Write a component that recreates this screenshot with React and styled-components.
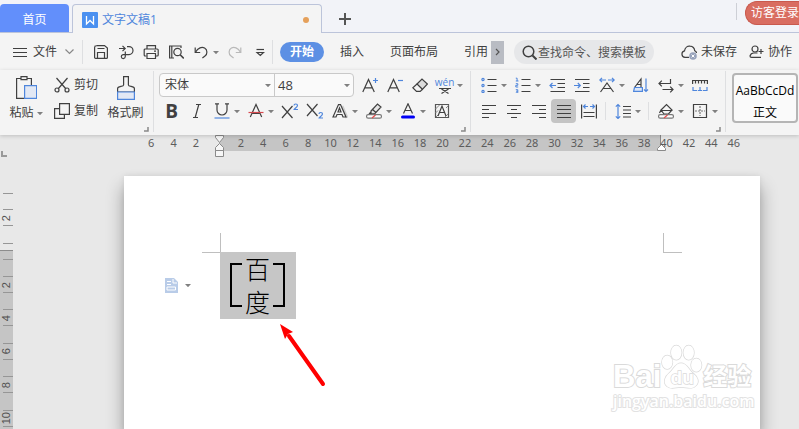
import React from "react";
import styled, { createGlobalStyle, css } from "styled-components";

const INK = "#404040";
const BLUE = "#4f86dc";
const LINE = "#dedfe1";

const GlobalStyle = createGlobalStyle`
  * { box-sizing: border-box; }
  body {
    margin: 0;
    overflow: hidden;
    font-family: "Open Sans", "Noto Sans CJK SC", sans-serif;
    font-size: 12px;
    line-height: 16px;
    color: ${INK};
    background: #e8e8e8;
  }
  button, input, select {
    font: inherit;
    color: inherit;
    border: 0;
    padding: 0;
    margin: 0;
    background: none;
    outline: 0;
  }
  svg { display: block; flex: none; }
`;

const Window = styled.div`
  display: flex;
  flex-direction: column;
  height: 100vh;
`;

/* ---------- tab bar ---------- */
const TabBar = styled.header`
  display: flex;
  flex: none;
  height: 33px;
  background: #f2f3f8;
`;
const Edge = styled.div`
  flex: ${(p) => (p.$grow ? "1" : "none")};
  width: ${(p) => (p.$grow ? "auto" : "3px")};
  border-bottom: 1px solid #bcc4da;
  display: flex;
  align-items: flex-start;
  min-width: 0;
`;
const HomeTab = styled.button`
  width: 69px;
  height: 29px;
  margin-top: 4px;
  padding-top: 3px;
  border-radius: 4px 4px 0 0;
  border-bottom: 1px solid #bcc4da;
  background: #628ffb;
  color: #fff;
`;
const DocTab = styled.button`
  display: flex;
  align-items: center;
  gap: 4px;
  width: 250px;
  height: 29px;
  margin-top: 4px;
  padding: 2px 12px 0 9px;
  border: 1px solid #bcc4da;
  border-bottom: 0;
  border-radius: 4px 4px 0 0;
  background: #f4f4f4;
  color: ${BLUE};
`;
const Unsaved = styled.span`
  width: 6px;
  height: 6px;
  margin-left: auto;
  border-radius: 50%;
  background: #e5a05a;
`;
const NewTab = styled.button`
  margin: 12px 0 0 16px;
`;
const LoginArea = styled.div`
  display: flex;
  margin-left: auto;
`;
const LoginRule = styled.i`
  width: 1px;
  height: 17px;
  margin: 3px 8px 0 0;
  background: #cdcfd6;
`;
const Login = styled.button`
  height: 24px;
  margin-top: 1px;
  padding: 0 0 0 5px;
  border: 1px solid #c9594d;
  border-right: 0;
  border-radius: 12px 0 0 12px;
  background: #d96d61;
  color: #fff;
  white-space: nowrap;
`;

/* ---------- menu row ---------- */
const MenuRow = styled.nav`
  display: flex;
  flex: none;
  align-items: center;
  height: 37px;
  padding: 1px 7px 0 13px;
  background: #f4f4f4;
  white-space: nowrap;
`;
const FileButton = styled.button`
  display: flex;
  align-items: center;
  gap: 6px;
  margin-right: 8px;
  & > svg:last-child { margin-left: 2px; }
`;
const Divider = styled.i`
  flex: none;
  width: 1px;
  height: ${(p) => p.$h || 24}px;
  margin: 0 ${(p) => p.$gap || 0}px;
  background: ${LINE};
`;
const QuickBar = styled.div`
  display: flex;
  padding-left: 5px;
`;
const MenuTabs = styled.div`
  display: flex;
  align-items: center;
  padding-left: 7px;
`;
const MenuTab = styled.button`
  height: 20px;
  padding: 0 ${(p) => (p.$active ? 10 : 0)}px;
  margin-left: ${(p) => p.$before || 0}px;
  border-radius: 10px;
  ${(p) => p.$active && css`background: #5d90e4; color: #fff; font-weight: 700;`}
`;
const MoreTabs = styled.button`
  display: grid;
  place-items: center;
  width: 13px;
  height: 23px;
  margin: 0 10px 0 3px;
  background: #b9bcc3;
`;
const Search = styled.label`
  display: flex;
  align-items: center;
  gap: 1px;
  width: 140px;
  height: 24px;
  padding: 0 4px 0 8px;
  border-radius: 12px;
  background: #e6e7e9;
  input { flex: 1; min-width: 0; height: 20px; }
  input::placeholder { color: #555; opacity: 1; }
`;
const StatusLinks = styled.div`
  display: flex;
  gap: 12px;
  margin-left: auto;
`;
const StatusButton = styled.button`
  display: flex;
  align-items: center;
  gap: 4px;
`;

/* ---------- ribbon ---------- */
const Ribbon = styled.section`
  display: flex;
  flex: none;
  height: 65px;
  position: relative;
  background: #f4f4f4;
  box-shadow: 0 1px 4px rgba(0, 0, 0, 0.18);
  overflow: hidden;
`;
const Group = styled.div`
  display: flex;
  flex: none;
  flex-direction: column;
  gap: 2px;
  padding: 3px 5px 0;
  background: linear-gradient(${LINE}, ${LINE}) right 1px / 1px 61px no-repeat;
`;
const ToolRow = styled.div`
  display: flex;
  align-items: center;
  height: 24px;
`;
const ToolButton = styled.button`
  display: grid;
  place-items: center;
  flex: none;
  width: 25px;
  height: 24px;
  border-radius: 4px;
  background: ${(p) => (p.$on ? "#c4c4c4" : "none")};
`;
const CaretButton = styled.button`
  flex: none;
  width: 9px;
  height: 24px;
  padding-right: 3px;
`;
const Launcher = styled.button`
  align-self: flex-end;
  margin-top: 1px;
`;
const Clipboard = styled.div`
  display: flex;
  height: 50px;
  padding: 0 5px 0 3px;
`;
const BigTool = styled.button`
  display: flex;
  flex-direction: column;
  align-items: center;
  justify-content: space-between;
  padding-top: 3px;
  width: ${(p) => p.$w}px;
  height: 48px;
`;
const Caption = styled.span`
  display: flex;
  align-items: center;
  gap: 3px;
  white-space: nowrap;
`;
const SmallTools = styled.div`
  display: flex;
  flex-direction: column;
  gap: 2px;
  margin: 0 9px 0 10px;
`;
const SmallTool = styled.button`
  display: flex;
  align-items: center;
  gap: 4px;
  height: 24px;
`;
const FontBox = styled.div`
  display: flex;
  width: 195px;
  height: 24px;
  margin-right: 3px;
  border: 1px solid #c9c9c9;
  border-radius: 4px;
  background: #fafafa;
`;
const Picker = styled.label`
  display: flex;
  align-items: center;
  width: ${(p) => p.$w}px;
  padding: 0 3px 0 ${(p) => p.$pad}px;
  & + & { border-left: 1px solid #c9c9c9; }
  select { flex: 1; min-width: 0; appearance: none; font-size: ${(p) => p.$size}px; }
`;
const StyleGallery = styled.div`
  display: flex;
  flex: 1;
  gap: 1px;
  height: 50px;
  margin: 3px 0 0 6px;
  overflow: hidden;
`;
const StyleCard = styled.button`
  display: flex;
  flex: none;
  flex-direction: column;
  align-items: center;
  justify-content: space-between;
  width: 66px;
  padding: ${(p) => (p.$on ? "8px 0 0" : "0")};
  border: ${(p) => (p.$on ? "2px solid #b5b5b5" : "1px solid #d5d5d5")};
  border-radius: 4px;
  background: #fafafa;
  color: #000;
`;

/* ---------- workspace ---------- */
const Workspace = styled.main`
  display: grid;
  grid-template-columns: 13px minmax(0, 1fr);
  grid-template-rows: 16px 25px minmax(0, 1fr);
  flex: 1;
  min-height: 0;
  background: #e8e8e8;
`;
const Ruler = styled.div`
  display: grid;
  grid-template-rows: 16px;
  grid-column: 1 / -1;
  grid-row: 1;
  & > * { grid-area: 1 / 1; }
`;
const RulerBand = styled.div`
  display: flex;
  justify-content: space-between;
  align-items: flex-start;
  margin: 0 138px 0 219px;
  background: #c5c5c5;
`;
const RulerScale = styled.div`
  display: grid;
  grid-template-columns: repeat(27, 1fr);
  margin: 0 54px 0 140px;
  font-family: "Noto Sans", sans-serif;
  font-size: 11px;
  line-height: 16px;
  text-align: center;
  color: #5c5c5c;
`;
const FirstIndent = styled.svg`
  height: 23px;
  margin-left: -4px;
`;
const RightIndent = styled.svg`
  margin-right: -5px;
`;
const SideRuler = styled.div`
  grid-column: 1;
  grid-row: 2 / -1;
  overflow: hidden;
  background: linear-gradient(#e8e8e8 99px, #8c8c8c 99px, #8c8c8c 100px, #c5c5c5 100px);
`;
const TabStop = styled.i`
  display: block;
  width: 6px;
  height: 6px;
  margin-left: 1px;
  margin-bottom: 36px;
  border-left: 2px solid #999;
  border-bottom: 2px solid #999;
`;
const Tick = styled.i`
  display: block;
  height: 1px;
  margin: 0 0 7px 3px;
  background: #969696;
`;
const SideScale = styled.div`
  display: grid;
  grid-template-rows: repeat(7, 1fr);
  align-items: center;
  height: 234px;
`;
const SideMark = styled.div`
  display: grid;
  justify-items: start;
  align-items: center;
  height: 17px;
  background:
    linear-gradient(#969696, #969696) right top / 10px 1px no-repeat,
    linear-gradient(#969696, #969696) right bottom / 10px 1px no-repeat;
  font-family: "Liberation Sans", sans-serif;
  font-size: 11px;
  color: #505050;
  span { writing-mode: vertical-rl; transform: rotate(180deg); line-height: 12px; }
`;
const Paper = styled.article`
  grid-column: 2;
  grid-row: 3;
  position: relative;
  margin: 0 39px 0 111px;
  padding-top: 57px;
  background: #fff;
  box-shadow: 0 12px 16px 1px rgba(0, 0, 0, 0.3), 0 0 6px rgba(0, 0, 0, 0.08);
`;
const Margins = styled.div`
  display: flex;
  justify-content: space-between;
  margin: 0 78px;
`;
const Corner = styled.i`
  width: 19px;
  height: 20px;
  border-bottom: 1px solid #bfbfbf;
  ${(p) => (p.$right ? "border-left" : "border-right")}: 1px solid #bfbfbf;
`;
const Body = styled.div`
  display: flex;
  align-items: center;
  margin-top: -1px;
  padding-left: 41px;
`;
const PasteOptions = styled.button`
  display: flex;
  align-items: center;
  gap: 7px;
  width: 55px;
`;
const Selection = styled.div`
  display: flex;
  align-items: center;
  justify-content: space-between;
  width: 76px;
  height: 67px;
  padding: 0 11px 2px 10px;
  background: #c6c6c6;
`;
const Bracket = styled.i`
  width: 12px;
  height: 44px;
  border: 2px solid #000;
  ${(p) => (p.$right ? "border-left: 0" : "border-right: 0")};
`;
const Stacked = styled.p`
  display: flex;
  flex-direction: column;
  margin: 0;
  font-family: "Noto Sans CJK SC", sans-serif;
  font-weight: 300;
  font-size: 25px;
  line-height: 33px;
  color: #000;
`;
const Pointer = styled.svg`
  position: absolute;
  left: 152px;
  top: 144px;
`;
const Watermark = styled.div`
  position: absolute;
  right: 5px;
  bottom: 18px;
  width: 142px;
  color: #fff;
  -webkit-text-stroke: 2px #dadada;
  paint-order: stroke fill;
`;
const Brand = styled.div`
  display: flex;
  align-items: flex-end;
  height: 48px;
  font: 700 31px/28px "Liberation Sans", "Noto Sans CJK SC", sans-serif;
`;
const BrandCn = styled.span`
  font: 700 24px/32px "Noto Sans CJK SC", sans-serif;
`;
const Site = styled.div`
  font: 600 16px/20px "Open Sans", sans-serif;
  white-space: nowrap;
  -webkit-text-stroke-color: #e2e2e2;
`;

/* ---------- drawings ---------- */
const Icon = ({ w = 16, h = 16, children }) => (
  <svg width={w} height={h} viewBox={`0 0 ${w} ${h}`} fill="none" stroke={INK} strokeWidth="1.2" aria-hidden="true">
    {children}
  </svg>
);
const Caret = () => (
  <svg width="6" height="3" viewBox="0 0 6 3" aria-hidden="true"><path d="M0 0h6L3 3.200z" fill="#808080" /></svg>
);
const blue = { stroke: BLUE };

const icons = {
  save: <><path d="M3.5 1.6h8L14.4 4v9.4a1 1 0 0 1-1 1H2.6a1 1 0 0 1-1-1V3.5a2 2 0 0 1 2-1.9z" /><path d="M4.5 14V8.500h7V14M4.5 4.500h7" /></>,
  output: <><path d="M1 4.500h6M4.500 1.800l2.700 2.700L4.500 7.200" /><path d="M9 2.600h2a4 4 0 0 1 0 8H5a2 2 0 1 0 2.300 2V7.500" /></>,
  print: <><path d="M4 5V1.600h8.500V5M3.500 12H2.200a1 1 0 0 1-1-1V6a1 1 0 0 1 1-1h12a1 1 0 0 1 1 1v5a1 1 0 0 1-1 1H13" /><path d="M4 9.500h8.500v5H4zM11 7.200h2" /></>,
  preview: <><path d="M6 14H1.600V2H13v2M3.800 2v12" /><circle cx="9.500" cy="8" r="3.700" /><path d="M12.200 10.700l3.600 3.800" strokeWidth="1.600" /></>,
  undo: <><path d="M2.200 3.500v5h5" /><path d="M2.500 8.300C5 3.500 9 2.600 11.600 4c3 1.800 3 6 .4 8l-2.600 2" /></>,
  redo: <g stroke="#b9b9b9"><path d="M13.800 3.500v5h-5" /><path d="M13.500 8.300C11 3.500 7 2.600 4.400 4c-3 1.800-3 6-.4 8l2.600 2" /></g>,
  custom: <><path d="M4.500 5.500h7.500" /><path d="M5 8.500h6.500l-3.200 3z" /></>,
  aPlus: <><path d="M.8 15L6.500 2.500 12.300 15M2.800 10.800h7.400" /><path d="M11 3.500h5M13.500 1v5" {...blue} /></>,
  aMinus: <><path d="M.8 15L6.500 2.500 12.300 15M2.800 10.800h7.400" /><path d="M11 3.500h5" {...blue} /></>,
  eraser: <><path d="M5 7l5-5 5.400 5-5 5.300z" fill="#dcdcdc" /><path d="M5 7L.8 10.800l3.700 3.600h3.700l2.300-2.200" /></>,
  strike: <><path d="M2.300 14L8 1.500 13.700 14M4.500 10.500h7" /><path d="M.5 9.500h15" stroke="#d8494f" /></>,
  outlineA: <><path d="M10 3l5 12" stroke="#cfcfcf" strokeWidth="3" /><path d="M1 14L6.500 1.600h2L14 14h-3l-1-2.500H5L4 14zM6 9h3L7.500 5z" fill="#f4f4f4" /></>,
  marker: <><path d="M5 8l6.500-7 3.500 3L9 10.500 5 11zM6.500 6.500l3.500 3M3 11l2-2" fill="#e6e6e6" /><rect x=".6" y="11.600" width="14.800" height="3.600" rx="1.500" fill="#fff" stroke="#777" /><path d="M6 15l3.500-3" stroke="#e24b4b" /></>,
  fontColor: <><path d="M3.500 10.500L8 .8l4.500 9.700M5 7.500h6" /><path d="M2.500 14h11" stroke="#0000f5" strokeWidth="3" strokeLinecap="round" /></>,
  boxA: <><path d="M1.500 1.500h13v13h-13z" stroke="#555" /><path d="M1.500 6l4-4M1.500 10L4 7.500M11 14l3-3M12 5l2.500-2.500M2 14l2-2" stroke="#888" strokeWidth="1" /><path d="M4 13L8 3l4 10M5.500 9.500h5" /></>,
  bullets: <><path d="M6.500 2.500h9M6.500 8.500h9M6.500 14.500h9" /><g {...blue}><circle cx="2" cy="2.500" r="1.100" /><circle cx="2" cy="8.500" r="1.100" /><circle cx="2" cy="14.500" r="1.100" /></g></>,
  numbers: <><path d="M6.500 2.500h9M6.500 8.500h9M6.500 14.500h9" /><path d="M.8 1.200h1.300V4M.8 4h2.700M.8 6.700h2v1.600h-2V10h2.400M.8 12.700h2v3.100h-2M1 14.200h2" strokeWidth="1" {...blue} /></>,
  outdent: <><path d="M1.500 2.500H16M8.500 6.500H16M8.500 10.500H16M1.500 14.500H16" /><path d="M7 8.500H1M3.500 6L1 8.500 3.500 11" {...blue} /></>,
  indent: <><path d="M1 2.500h14.500M9 6.500h6.500M9 10.500h6.500M1 14.500h14.500" /><path d="M0 8.500h6M3.800 6l2.500 2.500L3.800 11" {...blue} /></>,
  scaleA: <><path d="M1.500 15L8 6l6.500 9M4 11.500h8" /><path d="M7 3H.8M3 .8L.8 3 3 5.200M9 3h6.200M13 .8L15.200 3 13 5.200" {...blue} /></>,
  sortA: <><path d="M1.500 10.500L8 2v8.500M4 7.500h4" /><path d="M1.500 10.500L.6 14.400H9.400v-3.900z" fill="#dce7f8" {...blue} /><path d="M13 1.500v13M11 12.500l2 2 2-2" {...blue} /></>,
  wrap: <><path d="M12.500 2v4.500H1M3.800 3.700L1 6.500l2.800 2.800" /><path d="M4.500 12.500H15M12.200 9.700l2.800 2.800-2.800 2.800" /></>,
  tabs: <><path d="M.6 7V3.500h14.800V7M3.500 4v2.500M6.500 4v2.500M9.500 4v2.500M12.500 4v2.500" /><path d="M1 10v3.500h4M8 10v3.500M5.800 13.500h4.400M15 10v3.500h-4" {...blue} /></>,
  alignL: <path d="M1 2.500h14M1 6.500h7M1 10.500h14M1 14.500h7" />,
  alignC: <path d="M1 2.500h14M5 6.500h6M1 10.500h14M5 14.500h6" />,
  alignR: <path d="M1 2.500h14M8 6.500h7M1 10.500h14M8 14.500h7" />,
  justify: <path d="M1 2.500h14M1 6.500h14M1 10.500h14M1 14.500h14" />,
  distribute: <><path d="M.6 1.500v14M15.400 1.500v14M2.500 9.500h11M2.500 13.500h11" /><path d="M7 3.500H2.500M4.500 1.500l-2 2 2 2M9 3.500h4.500M11.500 1.500l2 2-2 2" {...blue} /></>,
  spacing: <><path d="M8 3.500h8M8 7h8M8 10.500h8M8 14h8" /><path d="M3 1.500v14M.8 3.700L3 1.500l2.200 2.200M.8 13.300L3 15.500l2.200-2.200" {...blue} /></>,
  fill: <><path d="M3 7l5.500-5.500L14 7l-3.500 4H6zM2.500 7.500h12M3 7l-1.500 3" /><rect x=".6" y="11.600" width="14.800" height="3.600" rx="1.500" fill="#fff" stroke="#777" /><path d="M6 15l3.500-3" stroke="#e24b4b" /></>,
  borders: <><path d="M1.500 1.500h13v13h-13z" /><path d="M8 3v10M3 8h10" strokeDasharray="2 1" stroke="#777" /></>,
};

function Tool({ name, label, caret, on, children }) {
  return (
    <>
      <ToolButton aria-label={label} $on={on} aria-pressed={on}>
        {children || <Icon>{icons[name]}</Icon>}
      </ToolButton>
      {caret && <CaretButton aria-label={`${label}选项`}><Caret /></CaretButton>}
    </>
  );
}

const LaunchMark = ({ label }) => (
  <Launcher aria-label={label}>
    <svg width="6" height="6" viewBox="0 0 6 6"><path d="M5 1v4H1" fill="none" stroke="#888" strokeWidth="1.500" /></svg>
  </Launcher>
);

const Glyph = styled.span`
  font-size: 19px;
  font-weight: 700;
  line-height: 20px;
`;
const Wen = styled.span`
  display: flex;
  flex-direction: column;
  align-items: center;
  font-size: 10px;
  line-height: 10px;
  color: ${BLUE};
`;

const hMarks = Array.from({ length: 27 }, (_, i) => (i - 3) * 2);
const sideMarks = [-2, 0, 2, 4, 6, 8, 10];

export default function App() {
  return (
    <Window>
      <GlobalStyle />
      <TabBar>
        <HomeTab>首页</HomeTab>
        <Edge />
        <DocTab>
          <svg width="16" height="16" viewBox="0 0 16 16" aria-hidden="true">
            <rect width="16" height="16" rx="1" fill="#4a90f0" />
            <path d="M4.500 4v8L8 8.500l3.500 3.500V4" fill="none" stroke="#fff" strokeWidth="1.300" />
          </svg>
          文字文稿1
          <Unsaved />
        </DocTab>
        <Edge $grow>
          <NewTab aria-label="新建">
            <svg width="14" height="14" viewBox="0 0 14 14"><path d="M7 1v12M1 7h12" stroke="#555" strokeWidth="2" /></svg>
          </NewTab>
          <LoginArea>
            <LoginRule />
            <Login>访客登录</Login>
          </LoginArea>
        </Edge>
      </TabBar>

      <MenuRow>
        <FileButton>
          <Icon w={14} h={11}><path d="M0 1.500h14M0 5.500h14M0 9.500h14" /></Icon>
          文件
          <Icon w={9} h={6}><path d="M.5.5l4 4 4-4" stroke="#888" /></Icon>
        </FileButton>
        <Divider />
        <QuickBar>
          <Tool name="save" label="保存" />
          <Tool name="output" label="输出" />
          <Tool name="print" label="打印" />
          <Tool name="preview" label="打印预览" />
          <Tool name="undo" label="撤销" caret />
          <Tool name="redo" label="恢复" />
          <Tool name="custom" label="自定义" />
        </QuickBar>
        <Divider />
        <MenuTabs>
          <MenuTab $active>开始</MenuTab>
          <MenuTab $before={16}>插入</MenuTab>
          <MenuTab $before={26}>页面布局</MenuTab>
          <MenuTab $before={26}>引用</MenuTab>
        </MenuTabs>
        <MoreTabs aria-label="更多">
          <Icon w={5} h={8}><path d="M1 1l3 3-3 3" stroke="#555" /></Icon>
        </MoreTabs>
        <Search>
          <Icon w={15} h={15}><circle cx="6.500" cy="6.500" r="5.300" strokeWidth="1.500" /><path d="M10.500 10.500l4 4" strokeWidth="2" /></Icon>
          <input aria-label="搜索" placeholder="查找命令、搜索模板" />
        </Search>
        <StatusLinks>
          <StatusButton>
            <Icon><path d="M8 13.400H4a3.300 3.300 0 0 1-.5-6.500C4 3.500 6.500 1.800 9 2.100c2.800.2 4.500 2.200 4.700 4.600 1.200.5 1.800 1.400 1.800 2.300" /><circle cx="12" cy="12" r="3.800" fill="#98a3bb" stroke="none" /><path d="M10.600 10.600l2.800 2.800M13.400 10.600l-2.800 2.800" stroke="#fff" strokeWidth="1" /></Icon>
            未保存
          </StatusButton>
          <StatusButton>
            <Icon w={15}><circle cx="6" cy="5" r="3" /><path d="M8.500 9H5a4 4 0 0 0-4 3c0 1 .5 1.400 1.500 1.400H12M9.500 7.500h5M12 5v5" /></Icon>
            协作
          </StatusButton>
        </StatusLinks>
      </MenuRow>

      <Ribbon>
        <Group>
          <Clipboard>
            <BigTool $w={36}>
              <Icon w={22} h={24}>
                <path d="M6 2.500H1.600v19.900H10M12 2.500h4.400V9" /><path d="M6 .6h6v3H6z" />
                <path d="M9.600 9.600h12v12.800h-12z" fill="#e2e8f4" {...blue} />
              </Icon>
              <Caption>粘贴<Caret /></Caption>
            </BigTool>
            <SmallTools>
              <SmallTool>
                <Icon><path d="M2.500 1l9.500 11M13.500 1L4 12" /><circle cx="3" cy="13" r="2" /><circle cx="13" cy="13" r="2" /></Icon>
                剪切
              </SmallTool>
              <SmallTool>
                <Icon><path d="M5.600.6h9.800v10.800H5.600zM5 5.600H.6v9.800h9.800V12" /></Icon>
                复制
              </SmallTool>
            </SmallTools>
            <BigTool $w={37}>
              <Icon w={20} h={24}>
                <path d="M7.600 9V.6h4.800V9c0 2 6 .8 6 3.500V16H1.600v-3.500C1.600 9.800 7.600 11 7.600 9z" />
                <path d="M1.600 16h16.800v7.400H1.600z" fill="#e2e8f4" {...blue} />
              </Icon>
              <Caption>格式刷</Caption>
            </BigTool>
          </Clipboard>
          <LaunchMark label="剪贴板设置" />
        </Group>

        <Group>
          <ToolRow>
            <FontBox>
              <Picker $w={114} $pad={5} $size={12}>
                <select aria-label="字体" defaultValue="宋体"><option>宋体</option></select>
                <Caret />
              </Picker>
              <Picker $w={79} $pad={3} $size={13}>
                <select aria-label="字号" defaultValue="48"><option>48</option></select>
                <Caret />
              </Picker>
            </FontBox>
            <Tool name="aPlus" label="增大字号" />
            <Tool name="aMinus" label="减小字号" />
            <Tool name="eraser" label="清除格式" />
            <Tool label="拼音指南" caret>
              <Wen>
                wén
                <Icon w={12} h={7}><path d="M0 1.500h12M2.500 2L9.500 6.500M9.500 2L2.500 6.500" /></Icon>
              </Wen>
            </Tool>
          </ToolRow>
          <ToolRow>
            <Tool label="加粗"><Glyph>B</Glyph></Tool>
            <Tool label="倾斜"><Icon><path d="M7 1.500h5M4 14.500h5M9.800 1.500L6.200 14.500" /></Icon></Tool>
            <Tool label="下划线" caret>
              <Icon><path d="M3 .5V7a5 5 0 0 0 10 0V.5M1 .8h4M11 .8h4" /><path d="M.5 15h15" {...blue} /></Icon>
            </Tool>
            <Tool name="strike" label="删除线" caret />
            <Tool label="上标"><Icon w={18}><path d="M1 3l10.500 12M11.500 3L1 15" /><path d="M13 2.500C13 .5 16.500.5 16.500 2.500 16.500 4 13 6 13 6.500h4" {...blue} /></Icon></Tool>
            <Tool label="下标"><Icon w={18}><path d="M1 1l10.500 12M11.500 1L1 13" /><path d="M13 11C13 9 16.500 9 16.500 11 16.500 12.500 13 14.500 13 15h4" {...blue} /></Icon></Tool>
            <Tool name="outlineA" label="文字效果" caret />
            <Tool name="marker" label="突出显示" caret />
            <Tool name="fontColor" label="字体颜色" caret />
            <Tool name="boxA" label="字符底纹" />
          </ToolRow>
          <LaunchMark label="字体设置" />
        </Group>

        <Group>
          <ToolRow>
            <Tool name="bullets" label="项目符号" caret />
            <Tool name="numbers" label="编号" caret />
            <Tool name="outdent" label="减少缩进" />
            <Tool name="indent" label="增加缩进" />
            <Tool name="scaleA" label="中文版式" caret />
            <Tool name="sortA" label="排序" />
            <Tool name="wrap" label="换行符" caret />
            <Tool name="tabs" label="制表位" />
          </ToolRow>
          <ToolRow>
            <Tool name="alignL" label="左对齐" />
            <Tool name="alignC" label="居中" />
            <Tool name="alignR" label="右对齐" />
            <Tool name="justify" label="两端对齐" on />
            <Tool name="distribute" label="分散对齐" />
            <Divider $h={18} $gap={4} />
            <Tool name="spacing" label="行距" caret />
            <Divider $h={18} $gap={4} />
            <Tool name="fill" label="底纹" caret />
            <Tool name="borders" label="边框" caret />
          </ToolRow>
          <LaunchMark label="段落设置" />
        </Group>

        <StyleGallery>
          <StyleCard $on><span>AaBbCcDd</span><span>正文</span></StyleCard>
          <StyleCard aria-label="标题" />
        </StyleGallery>
      </Ribbon>

      <Workspace>
        <Ruler>
          <RulerBand>
            <FirstIndent width="9" height="23" viewBox="0 0 9 23" fill="#f6f6f6" stroke="#8a8a8a">
              <path d="M.5.500h8v2L4.500 7.500.500 2.500zM4.500 8.500l4 4v3h-8v-3zM.5 15.500h8v6h-8z" />
            </FirstIndent>
            <RightIndent width="9" height="16" viewBox="0 0 9 16" fill="#fff" stroke="#8a8a8a">
              <path d="M3.500 0v10" /><path d="M4.500 9.500l4 4v2h-8v-2z" />
            </RightIndent>
          </RulerBand>
          <RulerScale>
            {hMarks.map((n) => <span key={n}>{n === 0 ? "" : Math.abs(n)}</span>)}
          </RulerScale>
        </Ruler>
        <SideRuler>
          <TabStop />
          <Tick />
          <SideScale>
            {sideMarks.map((n) => <SideMark key={n}><span>{Math.abs(n) || ""}</span></SideMark>)}
          </SideScale>
        </SideRuler>
        <Paper>
          <Margins><Corner /><Corner $right /></Margins>
          <Body>
            <PasteOptions aria-label="粘贴选项">
              <svg width="13" height="15" viewBox="0 0 13 15"><path d="M0 0h9l4 4v11H0z" fill="#b9cce8" /><path d="M2 3.500h4M2 6.500h4M2 9h8.500v3H2zM8 1v4h4" fill="none" stroke="#fff" /></svg>
              <Caret />
            </PasteOptions>
            <Selection>
              <Bracket />
              <Stacked><span>百</span><span>度</span></Stacked>
              <Bracket $right />
            </Selection>
          </Body>
          <Pointer width="52" height="68" viewBox="0 0 52 68" aria-hidden="true">
            <path d="M47 64L13 16" stroke="#f00" strokeWidth="4" strokeLinecap="round" />
            <path d="M4 4l13 8-5 2-3 5z" fill="#f00" />
          </Pointer>
          <Watermark>
            <Brand>
              Bai
              <svg width="42" height="48" viewBox="0 0 44 48" fill="#fff" stroke="#dadada" strokeWidth="1.500">
                <ellipse cx="6.500" cy="19" rx="5.500" ry="7" /><ellipse cx="16" cy="9" rx="5.500" ry="7.500" />
                <ellipse cx="29" cy="9" rx="5.500" ry="7.500" /><ellipse cx="37" cy="22" rx="5.500" ry="7" />
                <path d="M21 20c6 0 8 7 13 11 5 4 6 9 3 12-4 5-10 2-16 2s-11 3-15-1c-4-4-2-10 3-14 4-3 6-10 12-10z" />
                <text x="10" y="42" fontSize="20" fontWeight="700" fontFamily="Liberation Sans, sans-serif">du</text>
              </svg>
              <BrandCn>经验</BrandCn>
            </Brand>
            <Site>jingyan.baidu.com</Site>
          </Watermark>
        </Paper>
      </Workspace>
    </Window>
  );
}
